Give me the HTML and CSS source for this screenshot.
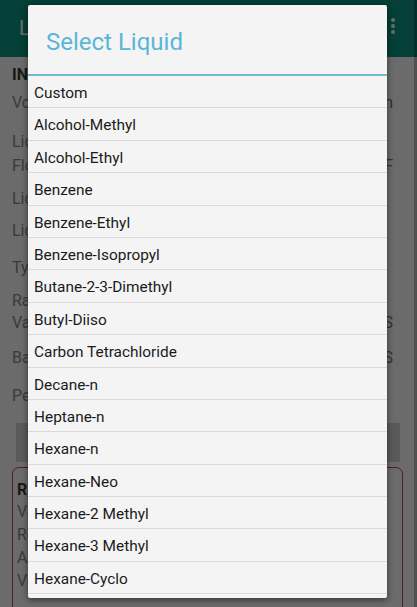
FILE: index.html
```html
<!DOCTYPE html>
<html>
<head>
<meta charset="utf-8">
<link rel="stylesheet" href="styles.css">
</head>
<body>
<div class="app">
  <header class="appbar">
    <span class="app-title">Liquid Flow</span>
    <span class="overflow"><i></i><i></i><i></i></span>
  </header>
  <main class="content">
    <h2 class="section-title">INPUT</h2>
    <div class="row r1"><span>Volume Units</span><span class="val">US Gallon</span></div>
    <div class="row r2"><span>Liquid<br>Flow Temperature</span><span class="val">Deg F</span></div>
    <div class="row r3"><span>Liquid</span><span class="val"></span></div>
    <div class="row r4"><span>Liquid Density</span><span class="val"></span></div>
    <div class="row r5"><span>Type of Flow</span><span class="val"></span></div>
    <div class="row r6"><span>Rated Flow</span><span class="val"></span></div>
    <div class="row r7"><span>Vapor Pressure</span><span class="val">PSIS</span></div>
    <div class="row r8"><span>Back Pressure</span><span class="val">PSIS</span></div>
    <div class="row r9"><span>Percent Overpressure</span><span class="val"></span></div>
    <div class="button">CALCULATE</div>
    <section class="card">
      <h2 class="card-title">RESULTS</h2>
      <div class="card-line">Valve Size</div>
      <div class="card-line">Required Area</div>
      <div class="card-line">Actual Area</div>
      <div class="card-line">Valve Capacity</div>
    </section>
  </main>
  <div class="edge"></div>
  <div class="scrim"></div>
  <div class="dialog">
    <h1 class="dialog-title">Select Liquid</h1>
    <ul class="list">
      <li>Custom</li>
      <li>Alcohol-Methyl</li>
      <li>Alcohol-Ethyl</li>
      <li>Benzene</li>
      <li>Benzene-Ethyl</li>
      <li>Benzene-Isopropyl</li>
      <li>Butane-2-3-Dimethyl</li>
      <li>Butyl-Diiso</li>
      <li>Carbon Tetrachloride</li>
      <li>Decane-n</li>
      <li>Heptane-n</li>
      <li>Hexane-n</li>
      <li>Hexane-Neo</li>
      <li>Hexane-2 Methyl</li>
      <li>Hexane-3 Methyl</li>
      <li>Hexane-Cyclo</li>
    </ul>
  </div>
</div>
</body>
</html>
```

FILE: styles.css
```css
* { box-sizing: border-box; }
html, body { margin: 0; padding: 0; }
body {
  width: 417px;
  height: 607px;
  overflow: hidden;
  font-family: Roboto, "Noto Sans", sans-serif;
  background: #ffffff;
}
.app {
  position: relative;
  width: 417px;
  height: 607px;
  overflow: hidden;
  background: #ffffff;
}
.appbar {
  height: 57px;
  background: #0a9a86;
  display: flex;
  align-items: center;
  justify-content: space-between;
  padding: 0 22px 0 19px;
  color: #ffffff;
}
.app-title {
  font-size: 20px;
  margin-top: -2px;
}
.overflow {
  display: flex;
  flex-direction: column;
  gap: 2px;
  margin-top: -6px;
}
.overflow i {
  display: block;
  width: 4px;
  height: 4px;
  border-radius: 50%;
  background: #ffffff;
}
.content {
  padding: 8px 0 0 12px;
  color: #8a8a8a;
  font-size: 16px;
}
.section-title {
  margin: 0;
  font-size: 16px;
  font-weight: bold;
  color: #3a3a3a;
  line-height: 20px;
}
.row {
  display: flex;
  justify-content: space-between;
  align-items: flex-end;
  padding-right: 24px;
  line-height: 24px;
}
.r1 { margin-top: 6px; }
.r2 { margin-top: 15px; }
.r3 { margin-top: 9px; }
.r4 { margin-top: 8px; }
.r5 { margin-top: 13px; }
.r6 { margin-top: 9px; }
.r7 { margin-top: -2px; }
.r8 { margin-top: 11px; }
.r9 { margin-top: 14px; }
.val { color: #777777; }
.button {
  margin: 15px 17px 0 4px;
  height: 39px;
  background: #d6d6d6;
  color: #d6d6d6;
  display: flex;
  align-items: center;
  justify-content: center;
}
.card {
  margin: 5px 14px 0 0;
  border: 1px solid #b04a62;
  border-radius: 7px;
  padding: 12px 8px 20px 4px;
  height: 160px;
  font-size: 16px;
}
.card-title {
  margin: 0;
  font-size: 16px;
  font-weight: bold;
  color: #3a3a3a;
  line-height: 20px;
}
.card-line {
  line-height: 23px;
}
.edge {
  position: absolute;
  top: 0;
  right: 0;
  width: 3px;
  height: 100%;
  background: rgba(0, 0, 0, 0.25);
}
.scrim {
  position: absolute;
  inset: 0;
  background: rgba(0, 0, 0, 0.58);
}
.dialog {
  position: absolute;
  left: 28px;
  top: 5px;
  width: 359px;
  height: 593px;
  background: #f4f4f4;
  border-radius: 2px;
  box-shadow: 0 2px 6px rgba(0, 0, 0, 0.5);
  overflow: hidden;
}
.dialog-title {
  margin: 0;
  height: 71px;
  padding: 22px 0 0 18px;
  font-size: 24px;
  font-weight: normal;
  color: #5ab6d8;
  line-height: 30px;
  border-bottom: 2px solid #6cbcd6;
}
.list {
  list-style: none;
  margin: 0;
  padding: 0;
}
.list li {
  height: 32.4px;
  border-bottom: 1px solid #dadada;
  padding: 2px 0 0 6px;
  font-size: 15.4px;
  color: #1a1a1a;
  line-height: 31px;
  white-space: nowrap;
}
```
